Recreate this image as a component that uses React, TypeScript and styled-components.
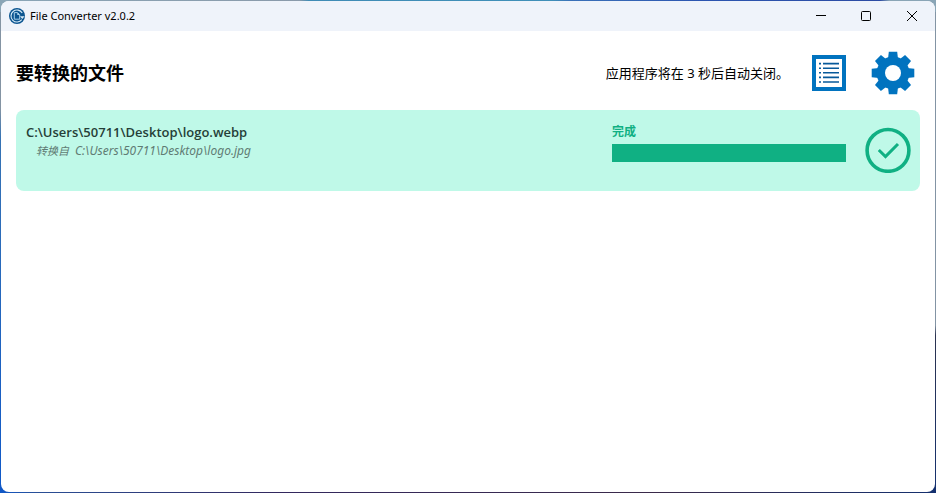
import React from "react";
import styled, { createGlobalStyle } from "styled-components";

const GlobalStyle = createGlobalStyle`
  * { box-sizing: border-box; }
  body {
    margin: 0;
    font-family: "Noto Sans", "Noto Sans CJK SC", sans-serif;
    font-size: 12px;
    color: #000;
  }
  button { font: inherit; color: inherit; }
`;

const Desktop = styled.div`
  display: flex;
  min-height: 100vh;
  padding: 1px;
  background:
    linear-gradient(90deg, #8aa5b6 0%, #8a9aaa 32%, #3f8bb5 33%, #3f8fb8 59%, #3a70b8 61%, #2c55b0 75%, #2c4ba3 94%, #8aa5b6 95%) top / 100% 12px no-repeat,
    linear-gradient(90deg, #0f58c8 0%, #2a4f96 4%, #33285e 30%, #3a2a4a 70%, #14306f 100%) bottom / 100% 12px no-repeat,
    linear-gradient(180deg, #8494a3 0%, #8494a3 22%, #3673b4 28%, #0f58c8 100%) left / 50% 100% no-repeat,
    linear-gradient(180deg, #8394a4 0%, #8394a4 66%, #2b3350 68%, #14306f 100%) right / 50% 100% no-repeat;
`;

const Window = styled.div`
  flex: 1;
  display: flex;
  flex-direction: column;
  min-width: 0;
  overflow: hidden;
  border-radius: 8px;
  background: #fff;
`;

const TitleBar = styled.header`
  display: flex;
  align-items: center;
  height: 30px;
  padding-left: 8px;
  background: #eff3fa;
`;

const AppTitle = styled.span`
  flex: 1;
  margin-left: 5px;
  font-size: 11px;
  line-height: 16px;
`;

const CaptionButton = styled.button`
  display: grid;
  place-items: center;
  width: 46px;
  height: 30px;
  padding: 0;
  border: 0;
  background: transparent;
`;

const Content = styled.main`
  flex: 1;
  padding: 20px 15px;
`;

const Toolbar = styled.div`
  display: flex;
  align-items: center;
  height: 44px;
  margin-bottom: 15px;
`;

const Heading = styled.h1`
  flex: 1;
  margin: 0;
  font-size: 18px;
  line-height: 24px;
  font-weight: 700;
`;

const Notice = styled.p`
  margin: 0 18px 0 0;
  font-size: 13px;
  line-height: 20px;
`;

const ToolButton = styled.button`
  display: grid;
  place-items: center;
  width: 44px;
  height: 44px;
  margin-right: 5px;
  padding: 0;
  border: 0;
  background: transparent;
  color: #0173bf;

  & + & { margin-left: 15px; }
`;

const JobList = styled.ul`
  margin: 0;
  padding: 0;
  list-style: none;
`;

const JobCard = styled.li`
  display: grid;
  grid-template-columns: minmax(0, 1fr) 234px 46px;
  column-gap: 19px;
  align-items: start;
  min-height: 81px;
  padding: 12px 9px 8px 10px;
  border-radius: 8px;
  background: #bff9e8;
`;

const OutputPath = styled.div`
  font-family: "Open Sans", "Noto Sans CJK SC", sans-serif;
  font-size: 13px;
  line-height: 20px;
  font-weight: 600;
  color: #263f38;
`;

const InputPath = styled.div`
  display: flex;
  align-items: baseline;
  gap: 6px;
  padding-left: 10px;
  font-size: 12px;
  line-height: 18px;
  font-style: italic;
  color: #5f7c74;
`;

const InputCaption = styled.span`
  font-size: 11px;
`;

const StatusLabel = styled.label`
  display: block;
  font-size: 12px;
  line-height: 20px;
  font-weight: 700;
  color: #10b083;
`;

const ProgressBar = styled.progress`
  display: block;
  appearance: none;
  width: 100%;
  height: 18px;
  margin-top: 2px;
  border: 0;
  background: #e6e6e6;

  &::-webkit-progress-bar { background: #e6e6e6; }
  &::-webkit-progress-value { background: #10b083; }
  &::-moz-progress-bar { background: #10b083; }
`;

const StatusIcon = styled.div`
  display: grid;
  padding-top: 5px;
  color: #10b083;
`;

const AppLogo = () => (
  <svg width="16" height="16" viewBox="0 0 16 16" aria-hidden="true">
    <circle cx="8" cy="8" r="8" fill="#0c5590" />
    <path d="M13.2 5A6 6 0 1 0 12.8 11.6" fill="none" stroke="#d8ecf8" strokeWidth="1.1" />
    <path d="M11 8.2H15.6L13.3 11Z" fill="#d8ecf8" />
    <path d="M5.3 4.6h3.2l2.2 2.2v4.4H5.3z" fill="#0c5590" stroke="#b9dcf2" strokeWidth=".9" />
    <path d="M8.3 4.6v2.4h2.4z" fill="#b9dcf2" />
  </svg>
);

const ListIcon = () => (
  <svg width="34" height="36" viewBox="0 0 34 36" aria-hidden="true">
    <path d="M0 0h34v36H0zM4 4v28h26V4z" fill="currentColor" fillRule="evenodd" />
    {[7.8, 12.4, 17, 21.6, 26.2].map((y) => (
      <path key={y} d={`M7 ${y}h2v1.6H7zM11 ${y}h16v1.6H11z`} fill="#07599a" />
    ))}
  </svg>
);

const GearIcon = () => (
  <svg width="44" height="44" viewBox="-22 -22 44 44" aria-hidden="true">
    <g fill="currentColor">
      {[0, 45, 90, 135].map((angle) => (
        <path
          key={angle}
          transform={`rotate(${angle})`}
          d="M-4.2 -21.3H4.2L5 -14V14L4.2 21.3H-4.2L-5 14V-14Z"
        />
      ))}
      <circle r="16.4" />
    </g>
    <circle r="8" fill="#fff" />
  </svg>
);

const DoneIcon = () => (
  <svg width="46" height="46" viewBox="0 0 46 46" fill="none" stroke="currentColor" role="img" aria-label="完成">
    <circle cx="23" cy="23.4" r="20.9" strokeWidth="3.6" />
    <path d="M13.8 23L20.5 29.6L33 17" strokeWidth="3" />
  </svg>
);

const jobs = [
  {
    id: "logo",
    output: "C:\\Users\\50711\\Desktop\\logo.webp",
    input: "C:\\Users\\50711\\Desktop\\logo.jpg",
    status: "完成",
    progress: 100,
  },
];

export default function App() {
  return (
    <>
      <GlobalStyle />
      <Desktop>
        <Window>
          <TitleBar>
            <AppLogo />
            <AppTitle>File Converter v2.0.2</AppTitle>
            <CaptionButton aria-label="最小化">
              <svg width="12" height="10" viewBox="0 0 12 10"><path d="M2 4.5h10" stroke="#000" /></svg>
            </CaptionButton>
            <CaptionButton aria-label="最大化">
              <svg width="10" height="10" viewBox="0 0 10 10"><rect x=".5" y=".5" width="9" height="9" rx="1" fill="none" stroke="#000" /></svg>
            </CaptionButton>
            <CaptionButton aria-label="关闭">
              <svg width="10" height="10" viewBox="0 0 10 10"><path d="M0 0l10 10M10 0L0 10" stroke="#000" /></svg>
            </CaptionButton>
          </TitleBar>
          <Content>
            <Toolbar>
              <Heading>要转换的文件</Heading>
              <Notice>应用程序将在 3 秒后自动关闭。</Notice>
              <ToolButton aria-label="诊断"><ListIcon /></ToolButton>
              <ToolButton aria-label="设置"><GearIcon /></ToolButton>
            </Toolbar>
            <JobList>
              {jobs.map((job) => (
                <JobCard key={job.id}>
                  <div>
                    <OutputPath>{job.output}</OutputPath>
                    <InputPath>
                      <InputCaption>转换自</InputCaption>
                      <span>{job.input}</span>
                    </InputPath>
                  </div>
                  <div>
                    <StatusLabel htmlFor={`progress-${job.id}`}>{job.status}</StatusLabel>
                    <ProgressBar id={`progress-${job.id}`} value={job.progress} max={100} />
                  </div>
                  <StatusIcon><DoneIcon /></StatusIcon>
                </JobCard>
              ))}
            </JobList>
          </Content>
        </Window>
      </Desktop>
    </>
  );
}
